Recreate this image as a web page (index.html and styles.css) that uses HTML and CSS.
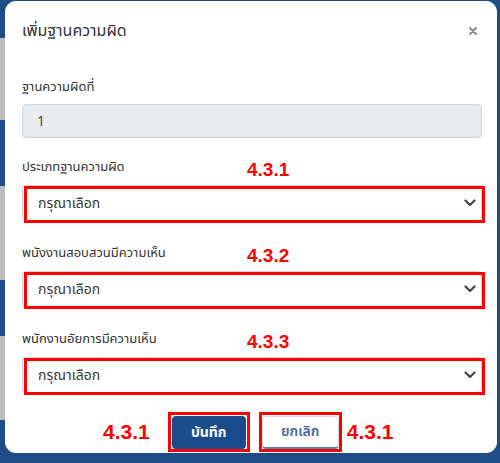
FILE: index.html
```html
<!DOCTYPE html>
<html lang="th">
<head>
<meta charset="utf-8">
<link rel="stylesheet" href="styles.css">
</head>
<body>
<div class="modal">
  <div class="modal-header">
    <span class="title">เพิ่มฐานความผิด</span>
    <svg class="close" width="8" height="8" viewBox="0 0 8 8"><path d="M1 1L7 7M7 1L1 7" stroke="#888" stroke-width="2" stroke-linecap="round"/></svg>
  </div>
  <div class="modal-body">
    <div class="label first">ฐานความผิดที่</div>
    <div class="input readonly">1</div>

    <div class="label">ประเภทฐานความผิด<span class="annot">4.3.1</span></div>
    <div class="select">
      <span class="select-text">กรุณาเลือก</span>
      <svg width="12" height="8" viewBox="0 0 12 8"><path d="M1.5 1.5L6 6L10.5 1.5" fill="none" stroke="#444" stroke-width="2.2" stroke-linecap="round" stroke-linejoin="round"/></svg>
      <div class="mark"></div>
    </div>

    <div class="label">พนังงานสอบสวนมีความเห็น<span class="annot">4.3.2</span></div>
    <div class="select">
      <span class="select-text">กรุณาเลือก</span>
      <svg width="12" height="8" viewBox="0 0 12 8"><path d="M1.5 1.5L6 6L10.5 1.5" fill="none" stroke="#444" stroke-width="2.2" stroke-linecap="round" stroke-linejoin="round"/></svg>
      <div class="mark"></div>
    </div>

    <div class="label">พนักงานอัยการมีความเห็น<span class="annot">4.3.3</span></div>
    <div class="select">
      <span class="select-text">กรุณาเลือก</span>
      <svg width="12" height="8" viewBox="0 0 12 8"><path d="M1.5 1.5L6 6L10.5 1.5" fill="none" stroke="#444" stroke-width="2.2" stroke-linecap="round" stroke-linejoin="round"/></svg>
      <div class="mark"></div>
    </div>

    <div class="actions">
      <span class="annot-lg">4.3.1</span>
      <div class="btn-box"><button class="btn btn-save">บันทึก</button></div>
      <div class="btn-box"><button class="btn btn-cancel">ยกเลิก</button></div>
      <span class="annot-lg">4.3.1</span>
    </div>
  </div>
</div>
</body>
</html>
```
FILE: styles.css
```css
html, body {
  margin: 0;
  padding: 0;
}
body {
  width: 500px;
  height: 463px;
  overflow: hidden;
  background:
    linear-gradient(to bottom,
      transparent 0, transparent 38px,
      #bdbdbd 38px, #bdbdbd 120px,
      transparent 120px, transparent 186px,
      #bdbdbd 186px, #bdbdbd 280px,
      transparent 280px, transparent 336px,
      #bdbdbd 336px, #bdbdbd 420px,
      transparent 420px) 0 0 / 5px 100% no-repeat,
    #1d4c86;
  font-family: "Noto Sans Thai", "Noto Sans", "Liberation Sans", sans-serif;
  color: #333;
}
.modal {
  margin: 1px 0 0 5px;
  width: 492px;
  height: 452px;
  box-sizing: border-box;
  background: #fff;
  border-radius: 11px;
  padding: 0 17px;
}
.modal-header {
  height: 60px;
  display: flex;
  align-items: center;
  justify-content: space-between;
  padding-right: 3px;
}
.title {
  font-size: 16px;
  color: #333;
}
.close {
  display: block;
}
.modal-body {
  display: flex;
  flex-direction: column;
}
.label {
  position: relative;
  height: 20px;
  line-height: 20px;
  font-size: 13px;
  color: #333;
  margin-top: 19px;
  margin-bottom: 8px;
}
.label.first {
  margin-top: 16px;
  margin-bottom: 7px;
}
.annot {
  position: absolute;
  left: 225px;
  top: 3px;
  font-family: "Liberation Sans", Arial, sans-serif;
  font-weight: bold;
  font-size: 19px;
  line-height: 20px;
  color: #ff0000;
}
.input {
  height: 34px;
  box-sizing: border-box;
  border: 1px solid #ced4da;
  border-radius: 4px;
  padding: 0 14px;
  display: flex;
  align-items: center;
  font-size: 14px;
  width: 460px;
}
.input.readonly {
  background: #e9ecef;
  color: #444;
}
.select {
  position: relative;
  height: 36px;
  width: 460px;
  box-sizing: border-box;
  border: 1px solid #ced4da;
  border-radius: 4px;
  padding: 0 5px 0 15px;
  display: flex;
  align-items: center;
  justify-content: space-between;
  color: #3a3a3a;
  margin-bottom: 3px;
}
.select-text {
  font-size: 14px;
}
.mark {
  position: absolute;
  left: 1px;
  top: 0px;
  right: -4px;
  bottom: -3px;
  border: 3px solid #ff0000;
}
.actions {
  display: flex;
  align-items: center;
  margin-top: 16px;
  padding-left: 81px;
}
.annot-lg {
  font-family: "Liberation Sans", Arial, sans-serif;
  font-weight: bold;
  font-size: 21px;
  color: #ff0000;
  line-height: 24px;
}
.btn-box {
  border: 3px solid #ff0000;
  width: 82px;
  height: 40px;
  box-sizing: border-box;
  display: flex;
  align-items: center;
  justify-content: center;
}
.btn-box:nth-child(2) {
  margin-left: 18px;
}
.btn-box:nth-child(3) {
  margin-left: 9px;
  width: 83px;
}
.annot-lg:last-child {
  margin-left: 5px;
}
.btn {
  font-family: "Noto Sans Thai", "Noto Sans", "Liberation Sans", sans-serif;
  font-size: 14px;
  border-radius: 4px;
  height: 33px;
  box-sizing: border-box;
  padding: 0;
}
.btn-save {
  width: 74px;
  background: #1a4b8c;
  color: #fff;
  border: none;
  font-weight: bold;
}
.btn-cancel {
  width: 77px;
  background: #fff;
  color: #45679c;
  border: 1px solid #d6dde8;
  border-bottom: 2px solid #5a7fb5;
  font-weight: 600;
}
```
